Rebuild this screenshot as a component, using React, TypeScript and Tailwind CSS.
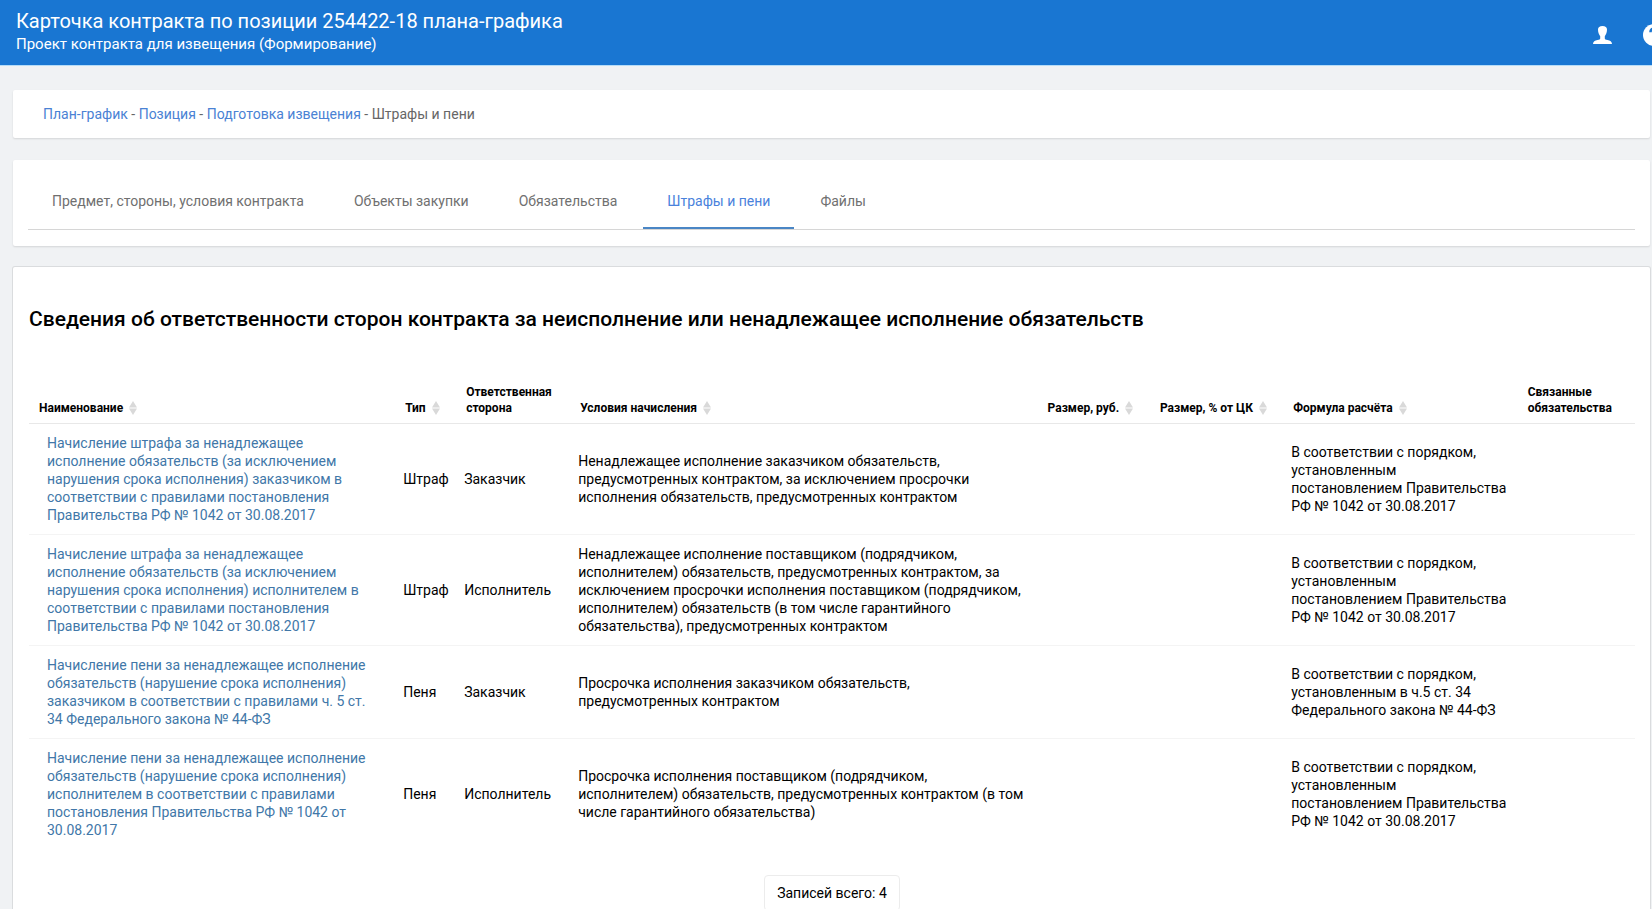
import { ReactNode } from "react";

const tabs = ["Предмет, стороны, условия контракта", "Объекты закупки", "Обязательства", "Штрафы и пени", "Файлы"];
const activeTab = "Штрафы и пени";

const crumbs = ["План-график", "Позиция", "Подготовка извещения"];

const columns = [
  { title: "Наименование", sortable: true, width: "w-[22.8%]" },
  { title: "Тип", sortable: true, width: "w-[3.8%]" },
  { title: "Ответственная сторона", sortable: false, width: "w-[7.1%]" },
  { title: "Условия начисления", sortable: true, width: "w-[29.1%]" },
  { title: "Размер, руб.", sortable: true, width: "w-[7%]" },
  { title: "Размер, % от ЦК", sortable: true, width: "w-[8.3%]" },
  { title: "Формула расчёта", sortable: true, width: "w-[14.6%]" },
  { title: "Связанные обязательства", sortable: false, width: "w-[7.3%]" },
];

const resolution = "В соответствии с порядком, установленным постановлением Правительства РФ № 1042 от 30.08.2017";

const rows = [
  {
    name: "Начисление штрафа за ненадлежащее исполнение обязательств (за исключением нарушения срока исполнения) заказчиком в соответствии с правилами постановления Правительства РФ № 1042 от 30.08.2017",
    type: "Штраф",
    side: "Заказчик",
    terms: "Ненадлежащее исполнение заказчиком обязательств, предусмотренных контрактом, за исключением просрочки исполнения обязательств, предусмотренных контрактом",
    formula: resolution,
  },
  {
    name: "Начисление штрафа за ненадлежащее исполнение обязательств (за исключением нарушения срока исполнения) исполнителем в соответствии с правилами постановления Правительства РФ № 1042 от 30.08.2017",
    type: "Штраф",
    side: "Исполнитель",
    terms: "Ненадлежащее исполнение поставщиком (подрядчиком, исполнителем) обязательств, предусмотренных контрактом, за исключением просрочки исполнения поставщиком (подрядчиком, исполнителем) обязательств (в том числе гарантийного обязательства), предусмотренных контрактом",
    formula: resolution,
  },
  {
    name: "Начисление пени за ненадлежащее исполнение обязательств (нарушение срока исполнения) заказчиком в соответствии с правилами ч. 5 ст. 34 Федерального закона № 44-ФЗ",
    type: "Пеня",
    side: "Заказчик",
    terms: "Просрочка исполнения заказчиком обязательств, предусмотренных контрактом",
    formula: "В соответствии с порядком, установленным в ч.5 ст. 34 Федерального закона № 44-ФЗ",
  },
  {
    name: "Начисление пени за ненадлежащее исполнение обязательств (нарушение срока исполнения) исполнителем в соответствии с правилами постановления Правительства РФ № 1042 от 30.08.2017",
    type: "Пеня",
    side: "Исполнитель",
    terms: "Просрочка исполнения поставщиком (подрядчиком, исполнителем) обязательств, предусмотренных контрактом (в том числе гарантийного обязательства)",
    formula: resolution,
  },
];

function UserIcon() {
  return (
    <svg viewBox="0 0 19 18" className="h-[18px] w-[19px]" fill="currentColor" aria-hidden="true">
      <path d="M9.500 0C6.600 0 5 1.200 5 3.600C5 6.400 5.900 8.800 7.200 10.200V12.400C7.200 13.300 6.300 13.600 4.500 14.100C1.800 14.800 0 15.600 0 18H19C19 15.600 17.200 14.800 14.500 14.100C12.700 13.600 11.800 13.300 11.800 12.400V10.200C13.100 8.800 14 6.400 14 3.600C14 1.200 12.400 0 9.500 0Z" />
    </svg>
  );
}

function HelpIcon() {
  return (
    <svg viewBox="0 0 22 22" className="h-[22px] w-[22px]" aria-hidden="true">
      <circle cx="11" cy="11" r="11" fill="currentColor" />
      <path d="M7.500 8.200C7.500 5.600 9 4.600 11.200 4.600C13.400 4.600 14.800 5.800 14.800 7.700C14.800 10.200 11.300 10.300 11.300 13.200" fill="none" stroke="#1976d2" strokeWidth="2.600" />
      <rect x="9.900" y="15" width="2.800" height="2.800" fill="#1976d2" />
    </svg>
  );
}

function SortIcon() {
  return (
    <svg viewBox="0 0 8 14" className="h-[14px] w-2 shrink-0" fill="#d9d9d9" aria-hidden="true">
      <path d="M4 0L8 6.500H0ZM0 7.500H8L4 14Z" />
    </svg>
  );
}

function Card({ children, className }: { children: ReactNode; className: string }) {
  return <section className={`bg-white ${className}`}>{children}</section>;
}

export default function App() {
  return (
    <div className="min-h-screen bg-[#f0f2f4] font-[Roboto,sans-serif] text-black">
      <header className="flex items-center justify-between overflow-hidden border-b border-[#b5dcf8] bg-[#1976d2] pt-2 pb-[7px] pl-4 text-white">
        <div>
          <h1 className="text-xl leading-[26px]">Карточка контракта по позиции 254422-18 плана-графика</h1>
          <p className="pb-1 text-[15px] leading-5">Проект контракта для извещения (Формирование)</p>
        </div>
        <div className="-mr-[13px] flex items-center gap-[31px] pt-1">
          <button type="button" aria-label="Профиль"><UserIcon /></button>
          <button type="button" aria-label="Справка"><HelpIcon /></button>
        </div>
      </header>

      <main className="flex flex-col pt-6 pr-0.5 pl-[13px]">
        <Card className="rounded-xs px-[30px] py-3 shadow-[0_1px_2px_rgba(0,0,0,0.12)]">
          <nav aria-label="Навигация" className="text-sm leading-6 text-[#666]">
            {crumbs.map((crumb) => (
              <span key={crumb}>
                <a href="#" className="text-[#4a82d4]">{crumb}</a>
                {" - "}
              </span>
            ))}
            <span>Штрафы и пени</span>
          </nav>
        </Card>

        <Card className="mt-[22px] rounded-xs px-[15px] py-4 shadow-[0_1px_2px_rgba(0,0,0,0.12)]">
          <nav aria-label="Разделы" className="flex gap-0.5 border-b border-[#d6d6d6]">
            {tabs.map((tab) => (
              <a
                key={tab}
                href="#"
                className={
                  tab === activeTab
                    ? "border-b-2 border-[#4a86c5] px-6 pt-[15px] pb-4 text-sm leading-5 text-[#4a82dc]"
                    : "border-b-2 border-transparent px-6 pt-[15px] pb-4 text-sm leading-5 text-[#707070]"
                }
              >
                {tab}
              </a>
            ))}
          </nav>
        </Card>

        <Card className="mt-[21px] rounded-xs pt-[37px] pr-[15px] pl-4 ring-1 ring-[#dadcde]">
          <h2 className="text-[21px] leading-[30px] font-medium">
            Сведения об ответственности сторон контракта за неисполнение или ненадлежащее исполнение обязательств
          </h2>
          <table className="mt-[50px] w-full table-fixed border-collapse text-left text-sm leading-[18px]">
            <thead>
              <tr className="border-b border-[#e8e8e8] align-bottom text-xs leading-4">
                {columns.map((column) => (
                  <th key={column.title} className={`${column.width} px-2.5 pb-[7px] font-bold`}>
                    {column.sortable ? (
                      <button type="button" className="flex items-center gap-1.5 whitespace-nowrap">
                        {column.title}
                        <SortIcon />
                      </button>
                    ) : (
                      column.title
                    )}
                  </th>
                ))}
              </tr>
            </thead>
            <tbody>
              {rows.map((row) => (
                <tr key={row.name} className="border-b border-[#f4f4f4] last:border-0">
                  <td className="px-[18px] py-2.5">
                    <a href="#" className="text-[#4177a8]">{row.name}</a>
                  </td>
                  <td className="px-2 py-2.5">{row.type}</td>
                  <td className="px-2 py-2.5">{row.side}</td>
                  <td className="px-2 py-2.5">{row.terms}</td>
                  <td />
                  <td />
                  <td className="px-2 py-2.5">{row.formula}</td>
                  <td />
                </tr>
              ))}
            </tbody>
          </table>
          <div className="flex justify-center pt-[26px]">
            <p className="rounded-sm border border-[#ececec] px-3 py-1.5 text-sm leading-[22px]">Записей всего: 4</p>
          </div>
        </Card>
      </main>
    </div>
  );
}
